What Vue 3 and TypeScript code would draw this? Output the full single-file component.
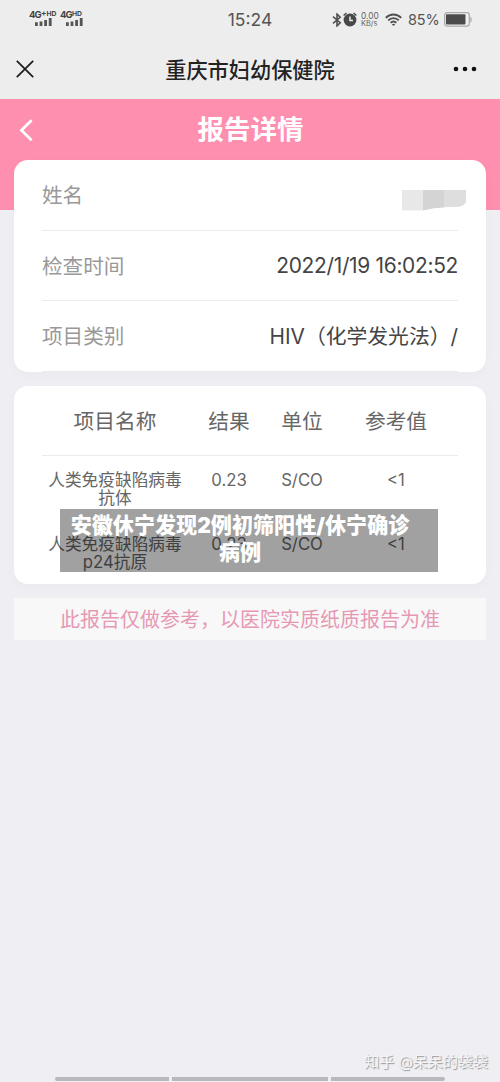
<script setup lang="ts">
interface InfoRow {
  label: string
  value: string
}
interface ResultRow {
  name: string[]
  result: string
  unit: string
  range: string
}

const info: InfoRow[] = [
  { label: '姓名', value: '' },
  { label: '检查时间', value: '2022/1/19 16:02:52' },
  { label: '项目类别', value: 'HIV（化学发光法）/' },
]
const columns: string[] = ['项目名称', '结果', '单位', '参考值']
const results: ResultRow[] = [
  { name: ['人类免疫缺陷病毒', '抗体'], result: '0.23', unit: 'S/CO', range: '<1' },
  { name: ['人类免疫缺陷病毒', 'p24抗原'], result: '0.23', unit: 'S/CO', range: '<1' },
]
</script>

<template>
  <div class="screen">
    <header class="top">
      <div class="status">
        <div class="sims">
          <div class="sim">
            <span class="net">4G<sup class="plus">+</sup><sup>HD</sup></span>
            <svg width="17" height="8" viewBox="0 0 17 8"><path d="M0 4.2h2.8V8H0zM4.6 3.6h2.8V8H4.6zM9.2 2H12v6H9.2zM13.8 0h2.8v8h-2.8z" /></svg>
          </div>
          <div class="sim second">
            <span class="net">4G<sup>HD</sup></span>
            <svg width="17" height="8" viewBox="0 0 17 8"><path d="M0 4.2h2.8V8H0zM4.6 3.6h2.8V8H4.6zM9.2 2H12v6H9.2zM13.8 0h2.8v8h-2.8z" /></svg>
          </div>
        </div>
        <span class="clock">15:24</span>
        <div class="indicators">
          <svg class="bt" width="10" height="14" viewBox="0 0 10 14"><path d="M1 3.7L8.2 9.7 5 12.9V1.1L8.2 4.3 1 10.3" fill="none" stroke="#505050" stroke-width="1.6" /></svg>
          <svg class="alarm" width="14" height="15" viewBox="0 0 14 15">
            <circle cx="7" cy="8" r="6.4" fill="#484848" />
            <path d="M.6 3.5L3.5 1M13.4 3.5L10.5 1" stroke="#484848" stroke-width="1.5" />
            <path d="M7 4.6v4h3" fill="none" stroke="#ededed" stroke-width="1.5" />
          </svg>
          <div class="speed"><span>0.00</span><span class="kb">KB/s</span></div>
          <svg class="wifi" width="17" height="14" viewBox="0 0 17 14">
            <g fill="none" stroke="#505050" stroke-width="1.9">
              <path d="M.8 4.9C5.3.3 11.7.3 16.2 4.9" />
              <path d="M3.2 7.4C6.3 4.3 10.7 4.3 13.8 7.4" />
              <path d="M5.6 9.8c1.8-1.6 4-1.6 5.8 0" />
            </g>
            <path d="M6.8 11.2q1.7-1.1 3.4 0L8.5 13z" fill="#505050" />
          </svg>
          <span class="percent">85%</span>
          <svg class="battery" width="28" height="15" viewBox="0 0 28 15">
            <rect x=".7" y=".7" width="24.6" height="13.4" rx="2.5" fill="#f0f0f0" stroke="#aaa" stroke-width="1.3" />
            <rect x="2" y="2.2" width="19.5" height="10.4" rx="1" fill="#4b4b4b" />
            <path d="M26.3 4.5q1.4.4 1.4 3t-1.4 3z" fill="#aaa" />
          </svg>
        </div>
      </div>
      <div class="nav">
        <svg class="close" width="18" height="18" viewBox="0 0 18 18"><path d="M.8.8l16.4 16.4M17.2.8L.8 17.2" stroke="#1c1c1c" stroke-width="1.7" /></svg>
        <h1>重庆市妇幼保健院</h1>
        <svg class="more" width="24" height="6" viewBox="0 0 24 6"><circle cx="3" cy="3" r="2.3" /><circle cx="12" cy="3" r="2.3" /><circle cx="21" cy="3" r="2.3" /></svg>
      </div>
    </header>

    <section class="banner">
      <svg class="back" width="14" height="23" viewBox="0 0 14 23"><path d="M12.6 1.2L2.4 11.2l10.2 10" fill="none" stroke="#fff" stroke-width="2.8" /></svg>
      <h2>报告详情</h2>
    </section>

    <main>
      <section class="card info">
        <div v-for="row in info" :key="row.label" class="info-row">
          <span class="label">{{ row.label }}</span>
          <span v-if="row.value" class="value" :class="{ digits: /^\d/.test(row.value) }">{{ row.value }}</span>
          <svg v-else class="masked" width="64" height="21" viewBox="0 0 64 21">
            <path d="M0 0h21v20.5H0z" fill="#e8e8e8" />
            <path d="M21 0h21v17.5l-10 .7-11 2.3z" fill="#d4d4d4" />
            <path d="M42 0h22v12q-2 4-8 4.7L42 17.3z" fill="#dedede" />
          </svg>
        </div>
      </section>

      <section class="card table">
        <div class="grid head">
          <span v-for="c in columns" :key="c">{{ c }}</span>
        </div>
        <div v-for="(r, i) in results" :key="i" class="grid body">
          <span class="name"><span v-for="part in r.name" :key="part">{{ part }}</span></span>
          <span>{{ r.result }}</span>
          <span>{{ r.unit }}</span>
          <span>{{ r.range }}</span>
        </div>
        <div class="caption">安徽休宁发现2例初筛阳性/休宁确诊<br />病例</div>
      </section>

      <p class="notice">此报告仅做参考，以医院实质纸质报告为准</p>
    </main>

    <footer>
      <div class="watermark">知乎 @呆呆的袋袋</div>
      <div class="bars"><i></i><i></i><i></i></div>
    </footer>
  </div>
</template>

<style>
body {
  margin: 0;
  background: #efeef3;
}
</style>

<style scoped>
.screen {
  width: 500px;
  height: 1082px;
  display: flex;
  flex-direction: column;
  overflow: hidden;
  background: #efeef3;
  font-family: Inter, "Noto Sans CJK SC", sans-serif;
  color: #444;
  white-space: nowrap;
}
h1, h2, p {
  margin: 0;
}
svg {
  display: block;
  flex: none;
}
.top {
  height: 99px;
  flex: none;
  background: #ededed;
}
.status {
  height: 40px;
  display: grid;
  grid-template-columns: 200px 100px 200px;
}
.sims {
  display: flex;
  padding: 11px 0 0 29px;
}
.sim {
  width: 31px;
  fill: #555;
}
.sim svg {
  margin-left: 6px;
}
.net {
  display: flex;
  height: 7px;
  font-size: 9.5px;
  font-weight: 700;
  line-height: 8px;
  letter-spacing: -0.8px;
}
.net sup {
  font-size: 6.8px;
  line-height: 5px;
  letter-spacing: 0;
}
.net .plus {
  font-size: 8px;
}
.clock {
  text-align: center;
  font-size: 17.5px;
  line-height: 40px;
  color: #555;
}
.indicators {
  display: flex;
  align-items: center;
  height: 39px;
  padding-left: 32px;
}
.alarm {
  margin-left: 1px;
}
.speed {
  width: 18px;
  margin-left: 4px;
  display: flex;
  flex-direction: column;
  font-size: 8.4px;
  line-height: 8px;
  color: #666;
}
.kb {
  font-size: 7.4px;
}
.wifi {
  margin-left: 6px;
}
.percent {
  width: 31px;
  margin-left: 6px;
  font-size: 14.5px;
  letter-spacing: -0.2px;
  color: #555;
}
.battery {
  margin-left: 5px;
}
.nav {
  height: 58px;
  display: grid;
  grid-template-columns: 100px 300px 100px;
  align-items: center;
}
.close {
  margin-left: 16px;
}
.more {
  margin-left: 53px;
  fill: #111;
}
.nav h1 {
  padding-top: 2px;
  text-align: center;
  font-size: 21.2px;
  font-weight: 500;
  line-height: 30px;
  color: #222;
}
.banner {
  height: 111px;
  flex: none;
  box-sizing: border-box;
  padding-top: 10px;
  display: grid;
  grid-template-columns: 100px 300px 100px;
  align-items: start;
  background: #ff8fae;
}
.back {
  margin: 10px 0 0 19px;
}
.banner h2 {
  padding-left: 1px;
  text-align: center;
  font-size: 26.5px;
  line-height: 40px;
  font-weight: 700;
  color: #fff;
}
main {
  margin: -50px 14px 0;
}
.card {
  box-sizing: border-box;
  border-radius: 14px;
  background: #fff;
  padding: 0 28px;
  box-shadow: 0 3px 12px rgba(0, 0, 0, 0.025);
}
.info {
  height: 212px;
}
.info-row {
  height: 70.6px;
  box-sizing: border-box;
  display: flex;
  align-items: center;
  justify-content: space-between;
  padding-bottom: 1px;
  border-bottom: 1.5px solid #ebebed;
  font-size: 20.6px;
}
.label {
  color: #999;
}
.value {
  font-size: 20.8px;
}
.digits {
  padding-top: 1px;
  font-size: 20.9px;
  letter-spacing: -0.3px;
}
.masked {
  margin: 12px -8px 0 0;
}
.table {
  position: relative;
  height: 198px;
  margin-top: 14.4px;
}
.grid {
  display: grid;
  grid-template-columns: 146px 82px 64px 124px;
  text-align: center;
}
.head {
  height: 70px;
  box-sizing: border-box;
  line-height: 71px;
  border-bottom: 1.5px solid #ebebed;
  font-size: 20.7px;
  color: #666;
}
.body {
  height: 64px;
  box-sizing: border-box;
  padding-top: 15px;
  font-size: 16.7px;
  line-height: 18px;
  color: #666;
}
.name {
  display: flex;
  flex-direction: column;
}
.caption {
  position: absolute;
  left: 46px;
  top: 122.6px;
  width: 378px;
  height: 63px;
  box-sizing: border-box;
  padding: 3px 18px 0 0;
  background: rgba(0, 0, 0, 0.37);
  color: #fff;
  font-size: 21.1px;
  font-weight: 900;
  line-height: 27px;
  text-align: center;
}
.notice {
  height: 42px;
  margin-top: 13.6px;
  background: #f8f8f8;
  text-align: center;
  font-size: 20px;
  line-height: 44px;
  color: #e698b4;
}
footer {
  margin-top: auto;
}
.watermark {
  padding-right: 12px;
  text-align: right;
  font-size: 15px;
  line-height: 20px;
  color: #f4f4f6;
  text-shadow: 1px 1px 1px #999;
}
.bars {
  display: flex;
  gap: 3px;
  padding: 5px 0 1px 55px;
}
.bars i {
  width: 114px;
  height: 4px;
  background: #b9b8bd;
}
.bars i:nth-child(2) {
  width: 156px;
}
.bars i:first-child {
  border-radius: 2px 0 0 2px;
}
.bars i:last-child {
  border-radius: 0 2px 2px 0;
}
</style>
